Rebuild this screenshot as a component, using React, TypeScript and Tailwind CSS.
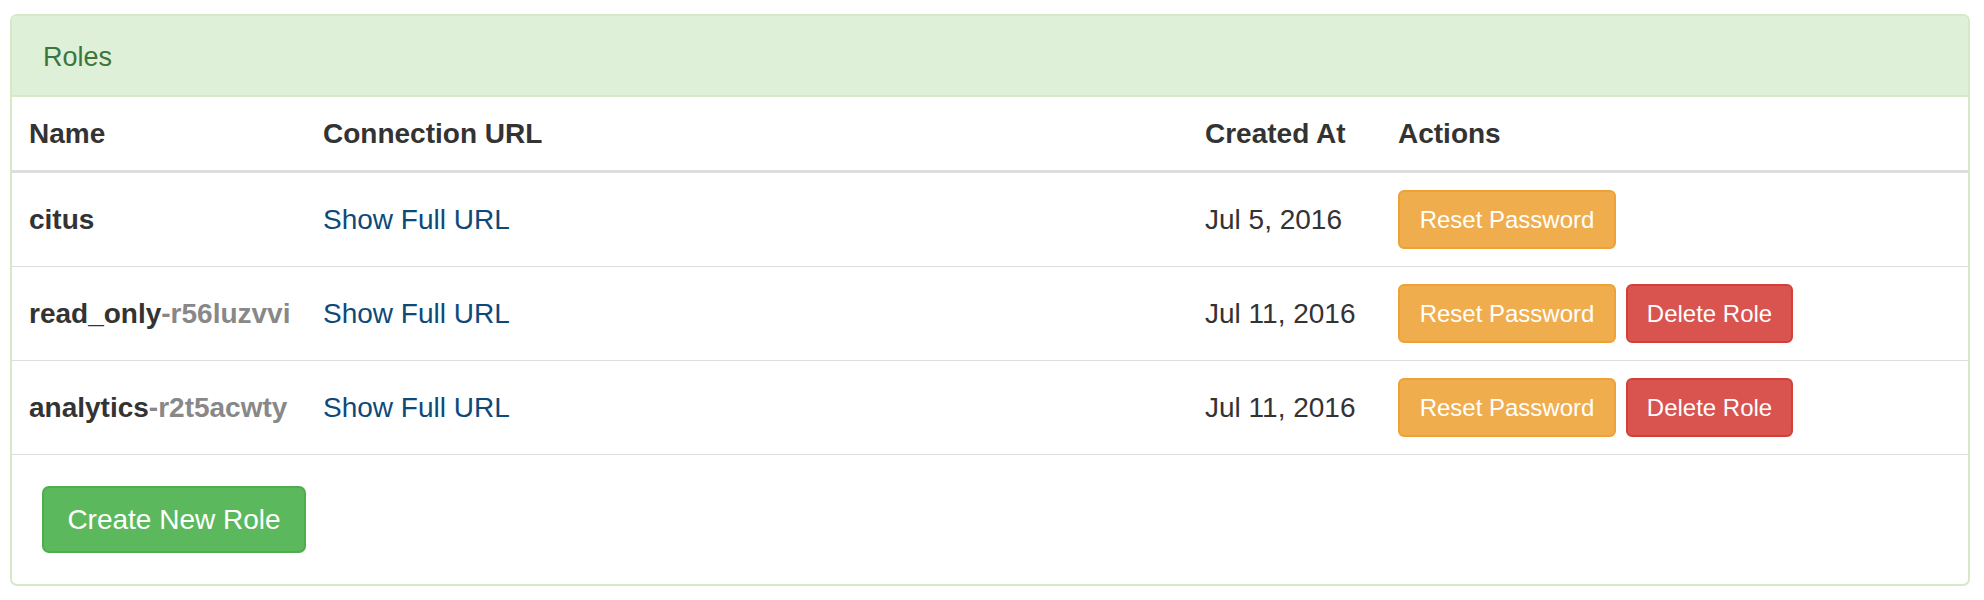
import React from "react";

type Role = { name: string; suffix?: string; date: string; canDelete: boolean };

const roles: Role[] = [
  { name: "citus", date: "Jul 5, 2016", canDelete: false },
  { name: "read_only", suffix: "-r56luzvvi", date: "Jul 11, 2016", canDelete: true },
  { name: "analytics", suffix: "-r2t5acwty", date: "Jul 11, 2016", canDelete: true },
];

const cols = "grid grid-cols-[294px_882px_193px_1fr]";

export default function App() {
  return (
    <div className="w-[1984px] h-[600px] bg-white pt-[14px] pl-[10px] font-['Liberation_Sans',Arial,sans-serif]">
      <div className="w-[1960px] h-[572px] border-2 border-[#d6e9c6] rounded-[7px] overflow-hidden flex flex-col bg-white">
        <div className="h-[81px] shrink-0 bg-[#dff0d8] border-b-2 border-[#d6e9c6] flex items-center pl-[31px] pt-[4px]">
          <span className="text-[27px] text-[#3c763d] leading-none">Roles</span>
        </div>
        <div className={`${cols} h-[76px] shrink-0 items-center border-b-[3px] border-[#dddddd] text-[28px] font-bold text-[#333333]`}>
          <div className="pl-[17px]">Name</div>
          <div className="pl-[17px]">Connection URL</div>
          <div className="pl-[17px]">Created At</div>
          <div className="pl-[17px]">Actions</div>
        </div>
        {roles.map((r) => (
          <div
            key={r.name}
            className={`${cols} h-[94px] shrink-0 items-center border-b border-[#dddddd] text-[28px] text-[#333333]`}
          >
            <div className="pl-[17px] font-bold whitespace-nowrap">
              {r.name}
              {r.suffix && <span className="text-[#888888]">{r.suffix}</span>}
            </div>
            <div className="pl-[17px]">
              <a className="text-[#0d4a78] cursor-pointer">Show Full URL</a>
            </div>
            <div className="pl-[17px] whitespace-nowrap">{r.date}</div>
            <div className="pl-[17px] flex gap-[10px]">
              <button className="h-[59px] w-[218px] rounded-[6px] bg-[#f0ad4e] border-2 border-[#eea236] text-white text-[24px] flex items-center justify-center">
                Reset Password
              </button>
              {r.canDelete && (
                <button className="h-[59px] w-[167px] rounded-[6px] bg-[#d9534f] border-2 border-[#d43f3a] text-white text-[24px] flex items-center justify-center">
                  Delete Role
                </button>
              )}
            </div>
          </div>
        ))}
        <div className="pt-[31px] pl-[30px]">
          <button className="h-[67px] w-[264px] rounded-[7px] bg-[#5cb85c] border-2 border-[#4cae4c] text-white text-[28px] flex items-center justify-center">
            Create New Role
          </button>
        </div>
      </div>
    </div>
  );
}
